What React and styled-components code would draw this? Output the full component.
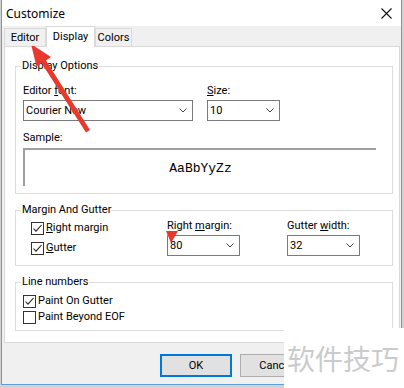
import React from 'react';
import styled, { createGlobalStyle } from 'styled-components';

const Global = createGlobalStyle`
  html, body { margin: 0; padding: 0; }
  body {
    background: #d2d2d2;
    width: 404px; height: 388px; overflow: hidden;
    font-family: Roboto, "Noto Sans", "Liberation Sans", sans-serif;
    font-size: 11px; color: #000;
  }
  * { box-sizing: border-box; }
`;

const Stage = styled.div`
  position: relative;
  width: 404px; height: 388px;
  padding-left: 1px;
`;

const Window = styled.div`
  width: 401px; height: 385px;
  border: 1px solid #5d9fd6; border-top: none;
  background: #f0f0f0;
  display: flex; flex-direction: column;
`;

const TitleBar = styled.div`
  height: 26px; flex: none;
  background: #fff;
  display: flex; align-items: center; justify-content: space-between;
  padding: 0 9px 0 4px;
  font-family: "Noto Sans", sans-serif;
  font-size: 12px;
`;

const CloseIcon = () => (
  <svg width="11" height="11" viewBox="0 0 11 11">
    <path d="M0.5 0.5 L10.5 10.5 M10.5 0.5 L0.5 10.5" stroke="#111" strokeWidth="1.1" fill="none" />
  </svg>
);

const TabStrip = styled.div`
  height: 20px; flex: none;
  display: flex; align-items: flex-end;
  padding-left: 2px;
`;

const Tab = styled.div`
  width: ${p => p.$w}px;
  height: ${p => (p.$active ? 21 : 18)}px;
  margin-bottom: ${p => (p.$active ? -1 : 0)}px;
  position: relative; z-index: ${p => (p.$active ? 2 : 1)};
  background: ${p => (p.$active ? '#fff' : '#f0f0f0')};
  border: 1px solid #d9d9d9; border-bottom: none;
  display: flex; align-items: center; justify-content: center;
  line-height: 14px;
  white-space: nowrap;
`;

const Panel = styled.div`
  height: 297px; flex: none;
  margin: 0 1px 0 2px;
  background: #fff;
  border: 1px solid #d9d9d9;
  padding: 12px 6px 0 10px;
  display: flex; flex-direction: column;
  gap: ${p => p.$gap}px;
`;

const Group = styled.fieldset`
  margin: 0; min-width: 0;
  border: 1px solid #dcdcdc;
  padding: ${p => p.$pt}px 0 ${p => p.$pb}px 7px;
  display: flex; flex-direction: column;
`;

const Legend = styled.legend`
  padding: 0 1px; margin-left: -2px;
  line-height: 14px; font-size: 11px;
`;

const FieldRow = styled.div`
  display: flex; gap: 14px;
`;

const Field = styled.div`
  display: flex; flex-direction: column;
  width: ${p => p.$w}px;
  gap: 2px;
  margin-top: ${p => p.$mt || 0}px;
`;

const Label = styled.div`
  line-height: 14px;
  white-space: nowrap;
  margin-bottom: ${p => p.$mb || 0}px;
  margin-top: ${p => p.$mt || 0}px;
`;

const Combo = styled.div`
  height: 21px;
  border: 1px solid #7a7a7a;
  background: #fff;
  display: flex; align-items: center; justify-content: space-between;
  padding: 0 5px 0 2px;
  line-height: 14px;
  white-space: nowrap;
`;

const Chevron = () => (
  <svg width="8" height="5" viewBox="0 0 8 5">
    <path d="M0.5 0.5 L4 4 L7.5 0.5" stroke="#444" strokeWidth="1" fill="none" />
  </svg>
);

const Sample = styled.div`
  width: 353px; height: 38px;
  background: #fff;
  box-shadow: inset 1px 1px 0 #a0a0a0, inset 2px 2px 0 #a0a0a0;
  display: flex; align-items: center; justify-content: center;
  font-family: "Liberation Mono", "Courier New", monospace;
  font-size: 13px;
  padding-left: 2px; padding-top: 2px;
`;

const MarginGrid = styled.div`
  display: grid;
  grid-template-columns: 136px 120px 73px;
  margin-left: 8px;
`;

const CheckList = styled.div`
  display: flex; flex-direction: column;
`;

const CheckRow = styled.label`
  height: ${p => p.$h}px;
  display: flex; align-items: center; gap: 2px;
  line-height: 14px;
  white-space: nowrap;
`;

const Box = styled.span`
  width: 13px; height: 13px; flex: none;
  border: 1px solid #333;
  background: #fff;
  display: flex; align-items: center; justify-content: center;
`;

const Check = ({ on }) => (
  <Box>
    {on && (
      <svg width="11" height="11" viewBox="0 0 11 11">
        <path d="M1.5 5.5 L4 8.2 L9.5 2" stroke="#222" strokeWidth="1.1" fill="none" />
      </svg>
    )}
  </Box>
);

const ButtonBar = styled.div`
  flex: 1;
  display: flex; justify-content: flex-end; align-items: flex-start;
  gap: 8px;
  padding: 11px 89px 0 0;
`;

const Button = styled.div`
  width: 72px; height: 23px;
  background: #e1e1e1;
  border: 1px solid ${p => (p.$default ? '#0078d7' : '#adadad')};
  box-shadow: ${p => (p.$default ? 'inset 0 0 0 1px #0078d7' : 'none')};
  display: flex; align-items: center; justify-content: center;
  line-height: 14px;
`;

const Watermark = styled.div`
  position: absolute; right: 0; bottom: 0;
  width: 120px; height: 60px;
  background: #fff;
  display: flex; align-items: center;
  padding-left: 3px;
  font-family: "Noto Sans CJK SC", sans-serif;
  font-size: 28px; color: #cbcbcb;
`;

const Overlay = styled.svg`
  position: absolute; left: 0; top: 0;
  pointer-events: none;
`;

export default function App() {
  return (
    <>
      <Global />
      <Stage>
        <Window>
          <TitleBar>
            <span>Customize</span>
            <CloseIcon />
          </TitleBar>
          <TabStrip>
            <Tab $w={42}>Editor</Tab>
            <Tab $w={49} $active>Display</Tab>
            <Tab $w={37}>Colors</Tab>
          </TabStrip>
          <Panel $gap={9}>
            <Group $pt={11} $pb={7}>
              <Legend>Display Options</Legend>
              <FieldRow>
                <Field $w={170}>
                  <Label>Editor <u>f</u>ont:</Label>
                  <Combo>Courier New<Chevron /></Combo>
                </Field>
                <Field $w={73}>
                  <Label><u>S</u>ize:</Label>
                  <Combo>10<Chevron /></Combo>
                </Field>
              </FieldRow>
              <Label $mt={10} $mb={3}>Sample:</Label>
              <Sample>AaBbYyZz</Sample>
            </Group>
            <Group $pt={1} $pb={7}>
              <Legend>Margin And Gutter</Legend>
              <MarginGrid>
                <CheckList>
                  <CheckRow $h={20}><Check on /><span><u>R</u>ight margin</span></CheckRow>
                  <CheckRow $h={20}><Check on /><span><u>G</u>utter</span></CheckRow>
                </CheckList>
                <Field $w={73} $mt={1}>
                  <Label>Right <u>m</u>argin:</Label>
                  <Combo>80<Chevron /></Combo>
                </Field>
                <Field $w={73} $mt={1}>
                  <Label>Gutter <u>w</u>idth:</Label>
                  <Combo>32<Chevron /></Combo>
                </Field>
              </MarginGrid>
            </Group>
            <Group $pt={4} $pb={5}>
              <Legend>Line numbers</Legend>
              <CheckList>
                <CheckRow $h={16}><Check on /><span>Paint On Gutter</span></CheckRow>
                <CheckRow $h={16}><Check /><span>Paint Beyond EOF</span></CheckRow>
              </CheckList>
            </Group>
          </Panel>
          <ButtonBar>
            <Button $default>OK</Button>
            <Button>Cancel</Button>
          </ButtonBar>
        </Window>
        <Overlay width="404" height="388" viewBox="0 0 404 388">
          <polygon points="31,44 51,57 46,60.5 90,130 86,132.5 41.5,63 36.5,66.5" fill="#e8392f" />
          <polygon points="166,231 178,231 171,243" fill="#e8392f" />
        </Overlay>
        <Watermark>软件技巧</Watermark>
      </Stage>
    </>
  );
}
